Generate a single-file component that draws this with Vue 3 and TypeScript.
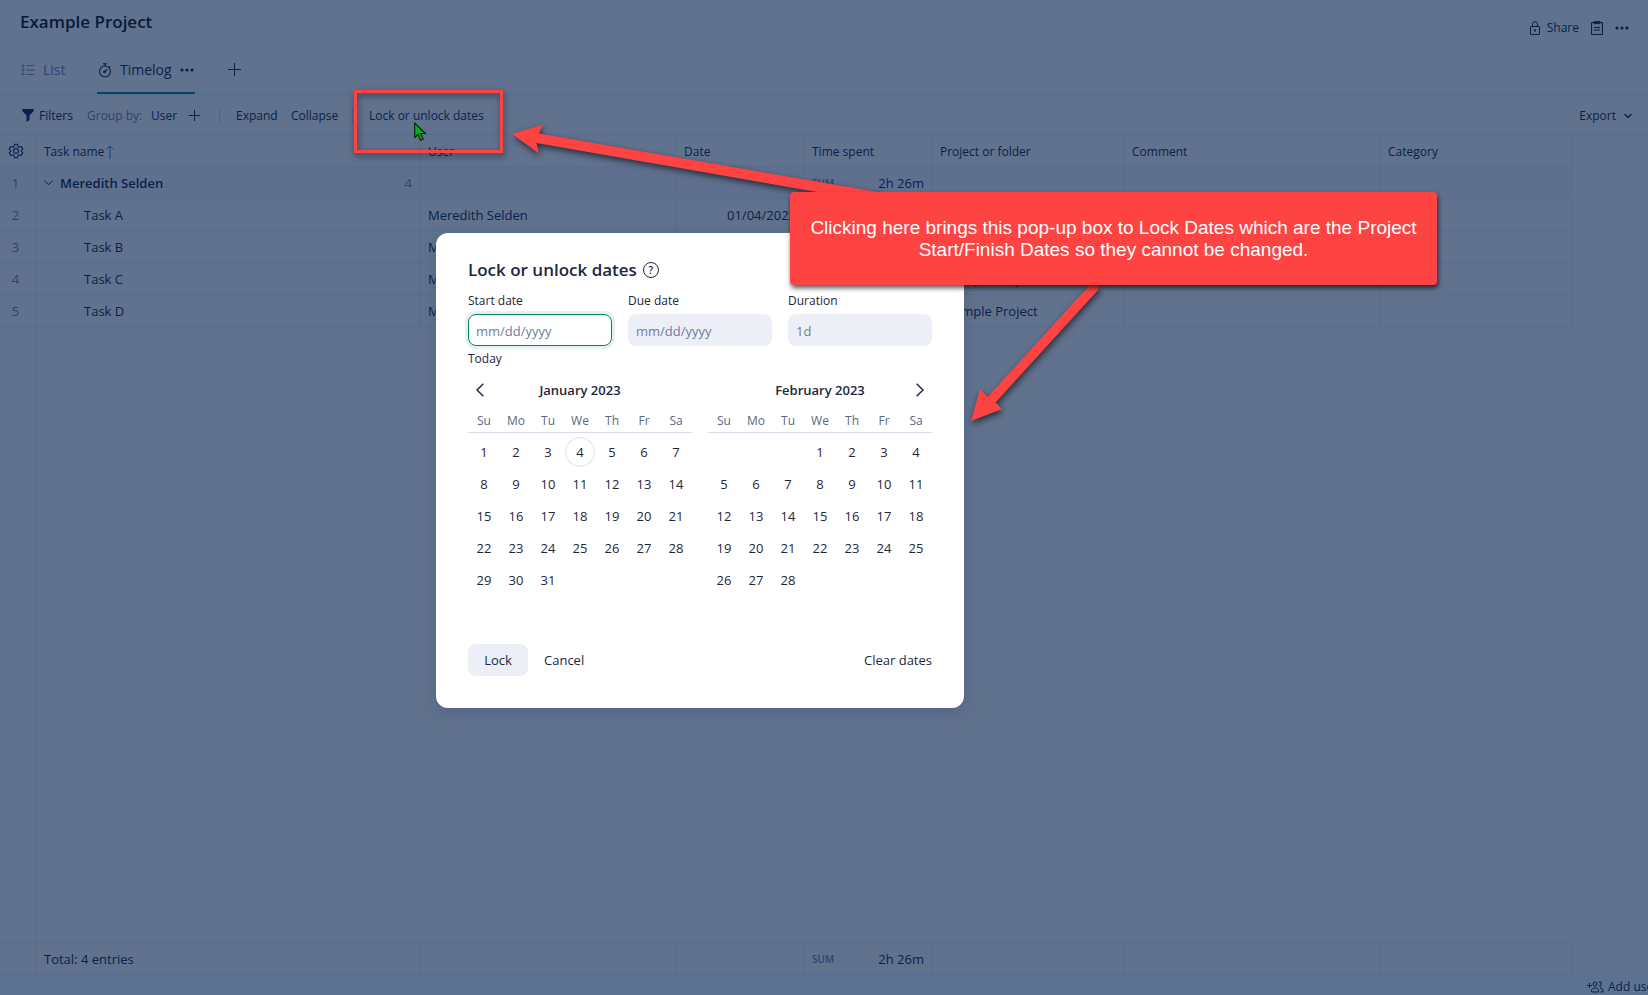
<script setup lang="ts">
import { ref } from 'vue'

interface Entry {
  name: string
  user: string
  date: string
  project: string
}

interface Month {
  title: string
  weeks: (number | null)[][]
  today: number | null
}

const entries: Entry[] = ['Task A', 'Task B', 'Task C', 'Task D'].map((name) => ({
  name,
  user: 'Meredith Selden',
  date: '01/04/2023',
  project: 'Example Project',
}))

const columns: string[] = ['User', 'Date', 'Time spent', 'Project or folder', 'Comment', 'Category']
const weekdays: string[] = ['Su', 'Mo', 'Tu', 'We', 'Th', 'Fr', 'Sa']

function buildWeeks(offset: number, days: number): (number | null)[][] {
  const weeks: (number | null)[][] = []
  for (let start = 1 - offset; start <= days; start += 7) {
    weeks.push(Array.from({ length: 7 }, (_, i) => (start + i >= 1 && start + i <= days ? start + i : null)))
  }
  return weeks
}

const months: Month[] = [
  { title: 'January 2023', weeks: buildWeeks(0, 31), today: 4 },
  { title: 'February 2023', weeks: buildWeeks(3, 28), today: null },
]

const startDate = ref('')
const dueDate = ref('')
const duration = ref('')
</script>

<template>
  <div class="page">
    <header class="top">
      <h1>Example Project</h1>
      <div class="top-actions">
        <button type="button" class="share">
          <svg width="12" height="14" viewBox="0 0 12 14" fill="none" stroke="currentColor"><rect x="1.5" y="5.5" width="9" height="8" rx=".5" /><path d="M3.5 5.5V3.2a2.5 2.5 0 0 1 5 0v2.3" /><rect x="5.5" y="9" width="1" height="1" /></svg>
          <span>Share</span>
        </button>
        <button type="button" aria-label="Description">
          <svg width="12" height="14" viewBox="0 0 12 14" fill="none" stroke="currentColor"><rect x=".5" y="1.5" width="11" height="12" rx="1" stroke-width="1.2" /><path d="M3 .6h6v2H3zM3 6.5h6M3 9h6" /></svg>
        </button>
        <button type="button" aria-label="More">
          <svg width="14" height="4" viewBox="0 0 14 4" fill="currentColor"><circle cx="2" cy="2" r="1.6" /><circle cx="7" cy="2" r="1.6" /><circle cx="12" cy="2" r="1.6" /></svg>
        </button>
      </div>
    </header>

    <nav class="tabs">
      <a href="#list" class="tab tab-list">
        <svg width="14" height="12" viewBox="0 0 14 12" fill="none" stroke="currentColor" stroke-width=".9"><circle cx="2" cy="1.8" r="1.1" /><circle cx="2" cy="6" r="1.1" /><circle cx="2" cy="10.2" r="1.1" /><path d="M5.500 1.500h8M5.500 6h8M5.500 10.500h8" /></svg>
        <span>List</span>
      </a>
      <div class="tab active">
        <a href="#timelog">
          <svg width="14" height="15" viewBox="0 0 14 15" fill="none" stroke="currentColor" stroke-width="1.100"><circle cx="7" cy="8.500" r="5.500" /><path d="M5 .8h4M7 1v2M11 4.500l1.200-1.200M6.300 9.200 9 6.500" /><circle cx="6.500" cy="9" r=".8" /></svg>
          <span>Timelog</span>
        </a>
        <button type="button" aria-label="Tab menu">
          <svg width="14" height="4" viewBox="0 0 14 4" fill="currentColor"><circle cx="2" cy="2" r="1.600" /><circle cx="7" cy="2" r="1.600" /><circle cx="12" cy="2" r="1.600" /></svg>
        </button>
      </div>
      <button type="button" class="add-tab" aria-label="Add view">
        <svg width="13" height="13" viewBox="0 0 13 13" stroke="currentColor"><path d="M6.500 0v13M0 6.500h13" /></svg>
      </button>
    </nav>

    <div class="toolbar">
      <button type="button" class="filters">
        <svg width="12" height="13" viewBox="0 0 12 13" fill="currentColor"><path d="M.3 0h11.400v2L7.500 6.500v4.500L4.500 13V6.500L.3 2z" /></svg>
        <span>Filters</span>
      </button>
      <span class="muted">Group by:</span>
      <button type="button" class="group">User</button>
      <button type="button" class="plus" aria-label="Add grouping">
        <svg width="11" height="11" viewBox="0 0 11 11" stroke="currentColor"><path d="M5.500 0v11M0 5.500h11" /></svg>
      </button>
      <span class="divider"></span>
      <button type="button" class="expand">Expand</button>
      <button type="button" class="collapse">Collapse</button>
      <span class="divider"></span>
      <button type="button">Lock or unlock dates</button>
      <button type="button" class="export">
        <span>Export</span>
        <svg width="8" height="6" viewBox="0 0 8 6" fill="none" stroke="currentColor" stroke-width="1.500"><path d="M.6 1 4 4.500 7.400 1" /></svg>
      </button>
    </div>

    <table class="grid">
      <colgroup>
        <col class="c-num" /><col class="c-task" /><col class="c-user" /><col class="c-date" /><col class="c-time" /><col class="c-project" /><col class="c-comment" /><col class="c-category" />
      </colgroup>
      <thead>
        <tr>
          <th class="num">
            <button type="button" class="gear" aria-label="Columns">
              <svg width="16" height="16" viewBox="0 0 24 24" fill="none" stroke="currentColor" stroke-width="1.600"><circle cx="12" cy="12" r="3.600" /><path d="M9.700 2h4.600l.6 3.200 2 1.200 3.100-1.100 2.300 4-2.500 2.100v1.200l2.500 2.100-2.300 4-3.100-1.100-2 1.200-.6 3.200H9.700l-.6-3.200-2-1.200L4 18.700l-2.300-4 2.500-2.100v-1.200L1.700 9.300l2.300-4 3.100 1.100 2-1.200z" stroke-linejoin="round" /></svg>
            </button>
          </th>
          <th>
            <span class="task-head">Task name
              <svg width="8" height="14" viewBox="0 0 8 14" fill="none" stroke="#0b4793"><path d="M4 14V1M.5 4.500 4 1l3.500 3.500" /></svg>
            </span>
          </th>
          <th v-for="column in columns" :key="column">{{ column }}</th>
        </tr>
      </thead>
      <tbody>
        <tr class="group-row">
          <td class="num">1</td>
          <td>
            <div class="group-cell">
              <svg width="9" height="6" viewBox="0 0 9 6" fill="none" stroke="currentColor"><path d="M.5.7 4.500 4.700 8.500.7" /></svg>
              <strong>Meredith Selden</strong>
              <span class="count">4</span>
            </div>
          </td>
          <td></td>
          <td></td>
          <td><div class="sum"><small>SUM</small><span>2h 26m</span></div></td>
          <td></td>
          <td></td>
          <td></td>
        </tr>
        <tr v-for="(entry, index) in entries" :key="entry.name">
          <td class="num">{{ index + 2 }}</td>
          <td class="task">{{ entry.name }}</td>
          <td>{{ entry.user }}</td>
          <td class="date">{{ entry.date }}</td>
          <td></td>
          <td>{{ entry.project }}</td>
          <td></td>
          <td></td>
        </tr>
      </tbody>
    </table>

    <div class="empty"><span class="gutter"></span></div>

    <table class="grid totals">
      <colgroup>
        <col class="c-num" /><col class="c-task" /><col class="c-user" /><col class="c-date" /><col class="c-time" /><col class="c-project" /><col class="c-comment" /><col class="c-category" />
      </colgroup>
      <tbody>
        <tr>
          <td></td>
          <td>Total: 4 entries</td>
          <td></td>
          <td></td>
          <td><div class="sum"><small>SUM</small><span>2h 26m</span></div></td>
          <td></td>
          <td></td>
          <td></td>
        </tr>
      </tbody>
    </table>

    <footer class="bottom">
      <button type="button">
        <svg width="17" height="12" viewBox="0 0 17 12" fill="none" stroke="currentColor"><path d="M2.500 2v5M0 4.500h5" /><circle cx="8" cy="3" r="2" /><path d="M4.500 11V9.500c0-1.700 1.500-2.500 3.500-2.500s3.500.8 3.500 2.500V11zM11.500 1H14v4h-2M13 7h1l2 1.500V11h-2.500" /></svg>
        <span>Add users</span>
      </button>
    </footer>

    <section class="dialog" role="dialog" aria-labelledby="dialog-title">
      <div class="dialog-head">
        <h2 id="dialog-title">Lock or unlock dates</h2>
        <button type="button" class="help" aria-label="Help">?</button>
      </div>
      <div class="fields">
        <label for="start">Start date</label>
        <label for="due">Due date</label>
        <label for="duration">Duration</label>
        <input id="start" v-model="startDate" type="text" class="focused" placeholder="mm/dd/yyyy" />
        <input id="due" v-model="dueDate" type="text" placeholder="mm/dd/yyyy" />
        <input id="duration" v-model="duration" type="text" placeholder="1d" />
      </div>
      <button type="button" class="today-link">Today</button>
      <div class="months">
        <div v-for="(month, index) in months" :key="month.title" class="month">
          <div class="month-head">
            <button v-if="index === 0" type="button" class="arrow prev" aria-label="Previous month">
              <svg width="8" height="14" viewBox="0 0 8 14" fill="none" stroke="currentColor" stroke-width="1.500"><path d="M7.300.7 1 7l6.300 6.300" /></svg>
            </button>
            <h3>{{ month.title }}</h3>
            <button v-if="index === 1" type="button" class="arrow next" aria-label="Next month">
              <svg width="8" height="14" viewBox="0 0 8 14" fill="none" stroke="currentColor" stroke-width="1.500"><path d="M.7.7 7 7 .7 13.300" /></svg>
            </button>
          </div>
          <table class="calendar">
            <thead>
              <tr><th v-for="day in weekdays" :key="day">{{ day }}</th></tr>
            </thead>
            <tbody>
              <tr v-for="(week, w) in month.weeks" :key="w">
                <td v-for="(day, d) in week" :key="d">
                  <button v-if="day" type="button" :class="{ today: day === month.today }">{{ day }}</button>
                </td>
              </tr>
            </tbody>
          </table>
        </div>
      </div>
      <div class="dialog-actions">
        <button type="button" class="lock">Lock</button>
        <button type="button">Cancel</button>
        <button type="button" class="clear">Clear dates</button>
      </div>
    </section>

    <div class="highlight"></div>
    <svg class="arrows" width="1120" height="440" viewBox="0 0 1120 440">
      <path d="M512 134 543 124.500 538.500 133.500 880 192.500V200H860L817 192 536.500 143 539 153.500z" />
      <path d="M971 421 980 389 987.500 397 1087 288 1090 284H1098L1099 289 995.500 402.500 1002 409z" />
    </svg>
    <svg class="cursor" width="14" height="20" viewBox="0 0 14 20"><path d="M.7 1v14.500l3.300-3 2.500 5.800 2.700-1.200-2.600-5.600h4.700z" fill="#0cab1c" stroke="#07200c" stroke-width="1.100" /></svg>
    <p class="callout">Clicking here brings this pop-up box to Lock Dates which are the Project Start/Finish Dates so they cannot be changed.</p>
  </div>
</template>

<style>
body {
  margin: 0;
  background: #61728e;
}
</style>

<style scoped>
.page {
  position: relative;
  display: flex;
  flex-direction: column;
  height: 100vh;
  overflow: hidden;
  background: #61728e;
  color: #0a1f4b;
  font: 13px/20px "Open Sans", "Noto Sans", sans-serif;
}

.page *,
.page *::before {
  box-sizing: border-box;
}

button {
  display: flex;
  align-items: center;
  flex: none;
  padding: 0;
  border: 0;
  background: none;
  color: inherit;
  font: inherit;
  white-space: nowrap;
}

svg {
  display: block;
  flex: none;
}

a {
  color: inherit;
  text-decoration: none;
}

.top {
  display: flex;
  justify-content: space-between;
  height: 46px;
  padding: 10px 19px 0 20px;
}

h1 {
  margin: 0;
  font-size: 17px;
  font-weight: 600;
  line-height: 24px;
  color: #071a3c;
}

.top-actions {
  display: flex;
  align-items: center;
  gap: 12px;
  height: 36px;
  font-size: 12px;
}

.share {
  gap: 6px;
}

.tabs {
  display: flex;
  flex: none;
  height: 49px;
  padding-left: 21px;
  border-bottom: 1px solid #596c8f;
  font-size: 14px;
}

.tab,
.tab a {
  display: flex;
  align-items: center;
  gap: 8px;
}

.tab-list {
  width: 76px;
  color: #2b4571;
}

.tab.active {
  justify-content: space-between;
  width: 98px;
  padding: 2px 1px 0;
  border-bottom: 2px solid #034a5c;
}

.tab-list,
.add-tab {
  padding-bottom: 1px;
}

.add-tab {
  margin-left: 33px;
}

.toolbar {
  display: flex;
  align-items: center;
  flex: none;
  height: 40px;
  padding: 2px 16px 0 22px;
  border-bottom: 1px solid #596c8f;
  font-size: 12px;
}

.filters {
  gap: 5px;
  width: 65px;
}

.muted {
  width: 64px;
  color: #2b4571;
}

.group {
  width: 38px;
}

.plus {
  width: 30px;
}

.divider {
  width: 1px;
  height: 16px;
  margin-right: 16px;
  background: #50658b;
}

.expand {
  width: 55px;
}

.collapse {
  width: 61px;
}

.export {
  gap: 8px;
  margin-left: auto;
}

.grid {
  flex: none;
  width: 1572px;
  border-collapse: separate;
  border-spacing: 0;
  table-layout: fixed;
}

.c-num { width: 36px; }
.c-task { width: 384px; }
.c-user { width: 256px; }
.c-date { width: 128px; }
.c-time { width: 128px; }
.c-project { width: 192px; }
.c-comment { width: 256px; }
.c-category { width: 192px; }

.grid th,
.grid td {
  height: 32px;
  padding: 0 7px 0 8px;
  border-right: 1px solid #596c8f;
  border-bottom: 1px solid #596c8f;
  text-align: left;
  white-space: nowrap;
}

.grid th {
  padding-top: 2px;
  font-size: 12px;
  font-weight: 400;
}

.group-row td {
  background: #5f708f;
}

.grid .num {
  padding: 0 4px 0 0;
  color: #2b4571;
  text-align: center;
}

.gear {
  width: 100%;
  justify-content: center;
  color: #0a1f4b;
}

.task-head {
  display: flex;
  align-items: center;
  gap: 2px;
}

.group-cell {
  display: flex;
  align-items: center;
  gap: 7px;
}

.group-cell strong {
  font-weight: 600;
}

.count {
  margin-left: auto;
  color: #2b4571;
}

.grid .task {
  padding-left: 48px;
}

.grid .date {
  text-align: right;
}

.sum {
  display: flex;
  align-items: center;
  justify-content: space-between;
}

.sum small {
  color: #2b4571;
  font-size: 10px;
  font-weight: 600;
}

.empty {
  display: flex;
  flex: 1;
}

.gutter {
  width: 36px;
  border-right: 1px solid #596c8f;
}

.totals td {
  height: 33px;
  border-top: 1px solid #596c8f;
}

.bottom {
  display: flex;
  justify-content: flex-end;
  flex: none;
  height: 20px;
  padding-top: 2px;
  overflow: hidden;
  background: #5c7292;
}

.bottom button {
  gap: 4px;
  width: 61px;
  height: 20px;
  font-size: 12px;
}

.dialog {
  position: absolute;
  top: 233px;
  left: 436px;
  width: 528px;
  padding: 24px 32px 32px;
  border-radius: 12px;
  background: #fff;
  box-shadow: 0 4px 16px #233b6640;
  color: #1d2740;
}

.dialog-head {
  display: flex;
  align-items: center;
  gap: 6px;
}

h2 {
  margin: 0;
  font-size: 17px;
  font-weight: 600;
  line-height: 26px;
}

.help {
  justify-content: center;
  width: 16px;
  height: 16px;
  border: 1px solid #1d2740;
  border-radius: 50%;
  font-size: 10px;
  font-weight: 600;
}

.fields {
  display: grid;
  grid-template-columns: repeat(3, 1fr);
  gap: 3px 16px;
  margin-top: 8px;
  font-size: 12px;
}

input {
  width: 100%;
  height: 32px;
  padding: 2px 8px 0;
  border: 0;
  border-radius: 8px;
  outline: 0;
  background: #eceff5;
  color: #1d2740;
  font: 13px "Open Sans", "Noto Sans", sans-serif;
}

input::placeholder {
  color: #6f7e99;
  opacity: 1;
}

.focused {
  border: 1px solid #078360;
  padding: 1px 7px 0;
  background: #fff;
  box-shadow: 0 0 0 3px #e6f2ef;
}

.today-link {
  height: 20px;
  margin-top: 3px;
  font-size: 12px;
}

.months {
  display: grid;
  grid-template-columns: 1fr 1fr;
  gap: 16px;
  margin-top: 5px;
}

.month-head {
  position: relative;
  display: flex;
  align-items: center;
  justify-content: center;
  height: 32px;
}

h3 {
  margin: 0;
  font-size: 13px;
  font-weight: 600;
}

.arrow {
  position: absolute;
  top: 0;
  justify-content: center;
  width: 24px;
  height: 32px;
}

.prev { left: 0; }
.next { right: 0; }

.calendar {
  width: 100%;
  border-spacing: 0;
  table-layout: fixed;
}

.calendar th {
  height: 27px;
  padding: 4px 0 0;
  border-bottom: 1px solid #d8dcea;
  color: #5b6987;
  font-size: 12px;
  font-weight: 400;
}

.calendar tbody::before {
  display: block;
  height: 3px;
  content: "";
}

.calendar td {
  height: 32px;
  padding: 0;
}

.calendar td button {
  justify-content: center;
  width: 30px;
  height: 30px;
  margin: 0 auto;
  border-radius: 50%;
}

.calendar td .today {
  border: 1px solid #dadfea;
}

.dialog-actions {
  display: flex;
  gap: 16px;
  margin-top: 48px;
}

.lock {
  justify-content: center;
  width: 60px;
  height: 32px;
  border-radius: 8px;
  background: #eceff5;
}

.clear {
  margin-left: auto;
}

.highlight {
  position: absolute;
  top: 90px;
  left: 354px;
  width: 149px;
  height: 63px;
  border: 3px solid #fe4343;
  filter: drop-shadow(1px 3px 3px #0008);
}

.arrows {
  position: absolute;
  top: 0;
  left: 0;
  fill: #fe4343;
  filter: drop-shadow(1px 3px 3px #0009);
  pointer-events: none;
}

.cursor {
  position: absolute;
  top: 122px;
  left: 414px;
}

.callout {
  position: absolute;
  top: 192px;
  left: 790px;
  width: 647px;
  margin: 0;
  padding: 25px 16px 24px;
  border-radius: 4px;
  background: #fe4343;
  box-shadow: 1px 3px 5px #000a;
  color: #fff;
  font: 19px/22px "Liberation Sans", Arial, sans-serif;
  text-align: center;
}
</style>
